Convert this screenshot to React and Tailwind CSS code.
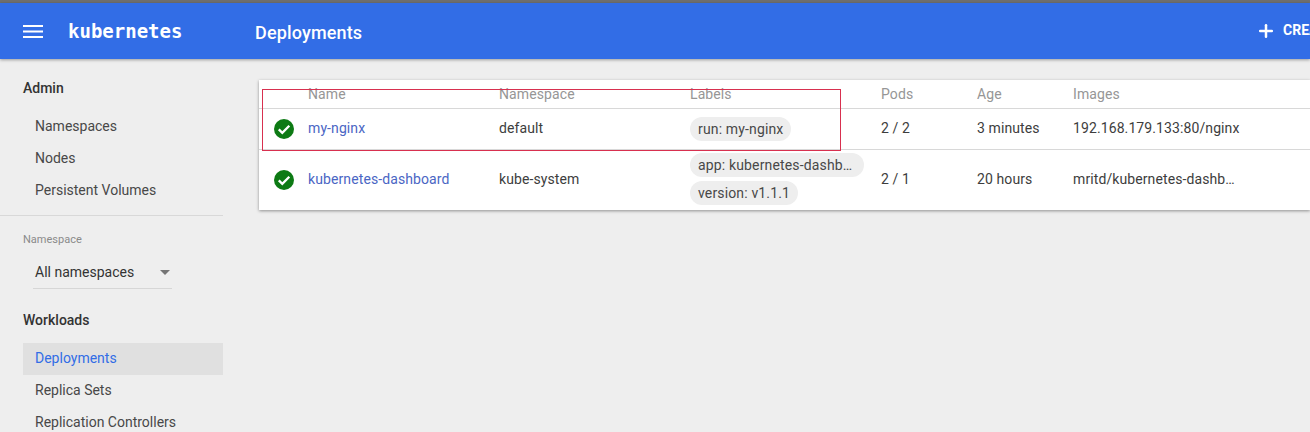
import { Plus } from "lucide-react";

const rowGrid = "grid grid-cols-[49px_191px_191px_191px_96px_96px_1fr] items-center pb-[2px]";

function StatusIcon() {
  return (
    <svg viewBox="0 0 20 20" className="ml-[15px] mt-[2px] h-5 w-5">
      <circle cx="10" cy="10" r="10" fill="#0d7a14" />
      <path d="M4.8 10.4l3.5 3.5 7-7.2" fill="none" stroke="#fff" strokeWidth="2.3" />
    </svg>
  );
}

function Chip({ children, className = "pr-2" }) {
  return (
    <span className={"inline-block h-6 rounded-xl bg-[#eeeeee] pl-2 text-sm leading-6 tracking-[0.15px] text-[#484848] " + className}>{children}</span>
  );
}

function NavItem({ children, active }) {
  return (
    <div
      className={
        "ml-[23px] h-8 w-[200px] pl-3 text-sm leading-[31px] " +
        (active ? "bg-[#e0e0e0] text-[#326de6]" : "text-[#484848]")
      }
    >
      {children}
    </div>
  );
}

function Sidebar() {
  return (
    <aside className="w-[223px] shrink-0 pt-[19px]">
      <div className="pl-[23px] text-sm font-medium leading-5 text-[#333]">Admin</div>
      <div className="mt-[13px]">
        <NavItem>Namespaces</NavItem>
        <NavItem>Nodes</NavItem>
        <NavItem>Persistent Volumes</NavItem>
      </div>
      <div className="mt-[8px] border-t border-[#d8d8d8] pl-[23px] pt-4">
        <div className="text-[11px] leading-4 text-[#8a8a8a]">Namespace</div>
        <div className="ml-[10px] mt-[8px] flex h-[33px] w-[139px] items-center justify-between border-b border-[#d6d6d6] pl-[2px]">
          <span className="text-sm text-[#333]">All namespaces</span>
          <span className="mr-[2px] h-0 w-0 border-x-[5px] border-t-[5px] border-x-transparent border-t-[#757575]" />
        </div>
      </div>
      <div className="mt-[21px] pl-[23px] text-sm font-medium leading-5 text-[#333]">Workloads</div>
      <div className="mt-[13px]">
        <NavItem active>Deployments</NavItem>
        <NavItem>Replica Sets</NavItem>
        <NavItem>Replication Controllers</NavItem>
      </div>
    </aside>
  );
}

function DeploymentsCard() {
  return (
    <section className="ml-[36px] mt-[21px] h-[130px] flex-1 bg-white text-sm tracking-[0.1px] text-[#3d3d3d] shadow-[0_1px_3px_rgba(0,0,0,0.4)]">
      <div className="grid h-[29px] grid-cols-[49px_191px_191px_191px_96px_96px_1fr] items-center border-b border-[#d8d8d8] pb-[1px] text-[#969696]">
        <span />
        <span>Name</span>
        <span>Namespace</span>
        <span>Labels</span>
        <span>Pods</span>
        <span>Age</span>
        <span>Images</span>
      </div>
      <div className={rowGrid + " h-[41px] border-b border-[#d8d8d8]"}>
        <StatusIcon />
        <a className="text-[#4a66c4]">my-nginx</a>
        <span>default</span>
        <div className="mt-[2px]">
          <Chip>run: my-nginx</Chip>
        </div>
        <span>2 / 2</span>
        <span>3 minutes</span>
        <span>192.168.179.133:80/nginx</span>
      </div>
      <div className={rowGrid + " h-[60px]"}>
        <StatusIcon />
        <a className="text-[#4a66c4]">kubernetes-dashboard</a>
        <span>kube-system</span>
        <div className="flex flex-col items-start gap-[4px]">
          <Chip className="pr-[12px]">app: kubernetes-dashb…</Chip>
          <Chip>version: v1.1.1</Chip>
        </div>
        <span>2 / 1</span>
        <span>20 hours</span>
        <span>mritd/kubernetes-dashb…</span>
      </div>
    </section>
  );
}

export default function App() {
  return (
    <div className="relative h-[432px] w-[1310px] overflow-hidden bg-[#eeeeee] font-['Roboto',sans-serif]">
      <div className="h-[3px] bg-[#6f6f6f]" />
      <header className="relative z-10 flex h-14 items-center bg-[#326de6] text-white shadow-[0_1px_3px_rgba(0,0,0,0.35)]">
        <svg viewBox="0 0 20 13" className="ml-[23px] h-[13px] w-5 fill-white">
          <rect y="0" width="20" height="2" />
          <rect y="5.5" width="20" height="2" />
          <rect y="11" width="20" height="2" />
        </svg>
        <span className="ml-[25px] w-[187px] font-['DejaVu_Sans_Mono',monospace] text-[19px] font-bold">kubernetes</span>
        <h1 className="mt-[3px] text-lg font-medium tracking-[0.15px]">Deployments</h1>
        <div className="ml-auto flex items-center gap-[7px]">
          <Plus className="h-[20px] w-[20px]" strokeWidth={3} />
          <span className="mb-[2px] w-[27px] overflow-hidden whitespace-nowrap text-sm font-bold">CREATE</span>
        </div>
      </header>
      <main className="flex">
        <Sidebar />
        <DeploymentsCard />
      </main>
      {/* red annotation box drawn over the screenshot */}
      <div className="absolute left-[262px] top-[89px] h-[62px] w-[579px] border border-[#d8304f]" />
    </div>
  );
}
